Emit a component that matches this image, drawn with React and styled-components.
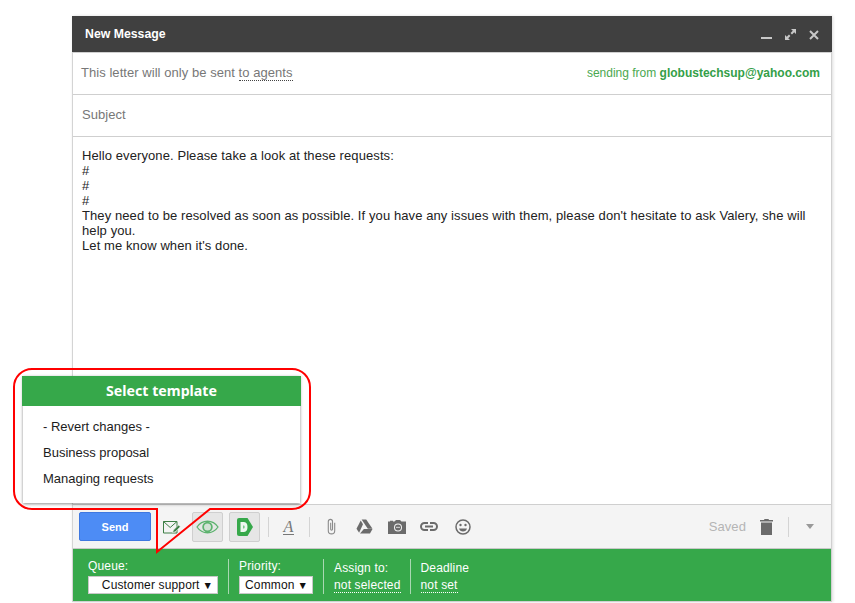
import React from 'react';
import styled, { createGlobalStyle } from 'styled-components';

const GlobalStyle = createGlobalStyle`
  html, body { margin: 0; padding: 0; background: #fff; }
  body { font-family: "Liberation Sans", Arial, sans-serif; }
  * { box-sizing: border-box; }
`;

const Page = styled.div`
  position: relative;
  width: 855px;
  height: 603px;
  padding: 16px 0 0 72px;
  overflow: hidden;
`;

const Compose = styled.div`
  width: 760px;
  height: 586px;
  display: flex;
  flex-direction: column;
  border-left: 1px solid #d4d4d4;
  border-right: 1px solid #d0d0d0;
  border-bottom: 1px solid #d0d0d0;
  box-shadow: 1px 0 3px rgba(0, 0, 0, 0.14);
`;

const Header = styled.div`
  height: 37px;
  margin: 0 -1px 0 -1px;
  flex: none;
  background: #404040;
  color: #fff;
  display: flex;
  align-items: center;
  justify-content: space-between;
  padding: 0 13px 1px 13px;
  font-size: 12.3px;
  font-weight: 700;
  border-bottom: 1px solid #d0d0d0;
`;

const HeaderIcons = styled.div`
  display: flex;
  align-items: center;
  gap: 13px;
  margin-top: 2px;
`;

const Row = styled.div`
  flex: none;
  height: ${p => p.$h}px;
  display: flex;
  align-items: center;
  justify-content: space-between;
  padding: 0 11px ${p => p.$pb || 0}px 8px;
  font-size: 13px;
  letter-spacing: 0.05px;
  color: #777;
  border-bottom: 1px solid #cfcfcf;
`;

const Dotted = styled.span`
  border-bottom: 1px dotted ${p => p.$c || '#444'};
  line-height: 14px;
  display: inline-block;
`;

const From = styled.div`
  color: #4aa84f;
  font-size: 12px;
  letter-spacing: 0;
  b { color: #34a048; font-weight: 700; }
`;

const Subject = styled.span`
  margin-left: 1px;
`;

const Body = styled.div`
  flex: 1;
  padding: 11px 9px;
  font-size: 13px;
  line-height: 15px;
  letter-spacing: 0.09px;
  color: #222;
`;

const Toolbar = styled.div`
  flex: none;
  height: 45px;
  background: #f4f4f4;
  border-top: 1px solid #cfcfcf;
  border-bottom: 1px solid #c8c8c8;
  display: flex;
  align-items: center;
  padding: 0 11px 0 6px;
`;

const SendButton = styled.div`
  width: 72px;
  height: 29px;
  background: #4d8cf5;
  border: 1px solid #3f78e0;
  border-radius: 2px;
  color: #fff;
  font-size: 11px;
  font-weight: 700;
  display: flex;
  align-items: center;
  justify-content: center;
  margin-right: 10px;
`;

const IconBox = styled.div`
  width: ${p => p.$w || 28}px;
  height: 30px;
  margin-left: ${p => p.$ml || 0}px;
  display: flex;
  align-items: center;
  justify-content: center;
  flex: none;
  ${p => p.$active && `
    background: #e6e6e6;
    border: 1px solid #cfcfcf;
    border-radius: 2px;
  `}
`;

const ToolSep = styled.div`
  width: 1px;
  height: 20px;
  background: #d4d4d4;
  flex: none;
  margin: 0 ${p => p.$m || 8}px;
`;

const FormatA = styled.span`
  font-family: "Liberation Serif", serif;
  font-style: italic;
  font-size: 16px;
  line-height: 15px;
  color: #777;
  border-bottom: 1px solid #777;
  padding: 0 1px;
`;

const Spacer = styled.div`
  flex: 1;
`;

const Saved = styled.span`
  font-size: 13px;
  letter-spacing: 0.1px;
  color: #b5b5b5;
  margin-right: 9px;
`;

const GreenBar = styled.div`
  flex: none;
  height: 52px;
  background: #36a84a;
  color: #fff;
  display: flex;
  align-items: flex-start;
  padding: 10px 0 0 15px;
  font-size: 12px;
  letter-spacing: 0.15px;
`;

const Field = styled.div`
  display: flex;
  flex-direction: column;
  gap: 3px;
  height: 35px;
  padding-top: ${p => p.$pt || 0}px;
  padding-right: ${p => p.$pr || 10}px;
  margin-right: 10px;
  border-right: ${p => (p.$last ? 'none' : '1px solid #a9d8b2')};
  line-height: 14px;
`;

const FakeSelect = styled.div`
  width: ${p => p.$w}px;
  height: 18px;
  background: #fff;
  border: 1px solid #c8c8c8;
  color: #111;
  display: flex;
  align-items: center;
  justify-content: flex-end;
  padding-right: 4px;
  gap: 3px;
  white-space: nowrap;
`;

const Arrow = styled.span`
  font-size: 10.5px;
  line-height: 1;
  letter-spacing: 0;
`;

const Overlay = styled.svg`
  position: absolute;
  left: 0;
  top: 0;
  pointer-events: none;
`;

const Popup = styled.div`
  position: absolute;
  left: 23px;
  top: 376px;
  width: 277px;
  height: 127px;
  background: #fff;
  box-shadow: 0 1px 3px rgba(0, 0, 0, 0.45);
`;

const PopupTitle = styled.div`
  height: 30px;
  margin: 0 -1px;
  background: #36a84a;
  color: #fff;
  font-family: "Noto Sans", sans-serif;
  font-weight: 700;
  font-size: 14.2px;
  padding-bottom: 2px;
  display: flex;
  align-items: center;
  justify-content: center;
`;

const PopupList = styled.div`
  padding: 8px 20px;
`;

const PopupItem = styled.div`
  height: 26px;
  line-height: 26px;
  font-size: 13px;
  color: #1c1c1c;
`;

const MinIcon = () => (
  <svg width="11" height="12" viewBox="0 0 11 12"><rect x="0" y="8" width="11" height="2" fill="#c8c8c8" /></svg>
);
const ExpandIcon = () => (
  <svg width="11" height="11" viewBox="0 0 11 11" fill="#c8c8c8">
    <path d="M6 0h5v5L9.200 3.200 7 5.400 5.600 4 7.800 1.800z" />
    <path d="M0 11V6l1.800 1.800L4 5.600 5.400 7 3.200 9.200 5 11z" />
  </svg>
);
const CloseIcon = () => (
  <svg width="10" height="10" viewBox="0 0 10 10"><path d="M1 1l8 8M9 1l-8 8" stroke="#c8c8c8" strokeWidth="2" /></svg>
);
const TickMail = () => (
  <svg width="18" height="14" viewBox="0 0 18 14" fill="none" stroke="#3e7f46" strokeWidth="1">
    <path d="M.5 1.500h13.500v11.500H.5z" />
    <path d="M.5 1.500l6.700 6 6.800-6" />
    <path d="M9.500 12.500l1-2.500 5-5 1.800 1.800-5 5z" fill="#3e7f46" stroke="#f4f4f4" strokeWidth=".6" />
  </svg>
);
const Eye = () => (
  <svg width="23" height="14" viewBox="0 0 26 16" fill="none" stroke="#5db36f" strokeWidth="1.500">
    <path d="M1 8c3-4.400 7-6.600 12-6.600S22 3.600 25 8c-3 4.400-7 6.600-12 6.600S4 12.400 1 8z" />
    <circle cx="13" cy="8" r="5" strokeWidth="2" fill="#d3e2d6" />
  </svg>
);
const DLogo = () => (
  <svg width="16" height="18" viewBox="0 0 16 18">
    <path d="M2 0h8.500L16 9l-5.500 9H2a2 2 0 0 1-2-2V2a2 2 0 0 1 2-2z" fill="#36a84a" />
    <path d="M3.500 4h3.500c2.500 0 3.500 2.200 3.500 5s-1 5-3.500 5H3.500z" fill="#eef8f0" />
    <path d="M6 7.500h.6c.8 0 1.100.6 1.100 1.500s-.3 1.500-1.100 1.500H6z" fill="#7cc88c" />
  </svg>
);
const Clip = () => (
  <svg width="11" height="17" viewBox="0 0 12 18" fill="none" stroke="#8a8a8a" strokeWidth="1.200">
    <path d="M9.500 5v8.500a3.500 3.500 0 0 1-7 0V3.500a2.300 2.300 0 0 1 4.600 0V12a1 1 0 0 1-2 0V5" />
  </svg>
);
const Drive = () => (
  <svg width="17" height="15" viewBox="0 0 17 15" fill="#6b6b6b">
    <path d="M5.600 0.500h4.600l6.300 9.300h-4.700z" />
    <path d="M4.700 1.500l2.300 3.800-3.900 8.400L.5 9.800z" />
    <path d="M7.900 10h8.600l-2.500 4.500H4z" />
  </svg>
);
const Camera = () => (
  <svg width="18" height="14" viewBox="0 0 18 14">
    <path d="M0 1.500h2V.8h3v.7h1.500L8 0h4l1.500 1.500H18V14H0z" fill="#6b6b6b" />
    <circle cx="10" cy="7.500" r="4" fill="#f4f4f4" />
    <circle cx="10" cy="7.500" r="3" fill="#6b6b6b" />
    <rect x="8" y="6.800" width="4" height="1.200" fill="#c4c4c4" />
  </svg>
);
const LinkIcon = () => (
  <svg width="18" height="9" viewBox="0 0 18 9" fill="none" stroke="#6b6b6b" strokeWidth="2">
    <path d="M8 1H4.500a3.500 3.500 0 0 0 0 7H8M10 1h3.500a3.500 3.500 0 0 1 0 7H10M5 4.500h8" />
  </svg>
);
const Smile = () => (
  <svg width="16" height="16" viewBox="0 0 16 16" fill="none" stroke="#6b6b6b" strokeWidth="1.500">
    <circle cx="8" cy="8" r="7" />
    <circle cx="5.500" cy="6" r="1.200" fill="#6b6b6b" stroke="none" />
    <circle cx="10.500" cy="6" r="1.200" fill="#6b6b6b" stroke="none" />
    <path d="M4 9.500h8c-.5 2-2 3-4 3s-3.500-1-4-3z" fill="#6b6b6b" stroke="none" />
  </svg>
);
const Trash = () => (
  <svg width="13" height="16" viewBox="0 0 13 16" fill="#6b6b6b">
    <path d="M4.500 0h4l.5 1h4v1.500H0V1h4z" />
    <path d="M1 3.500h11V16H1z" />
  </svg>
);
const Caret = () => (
  <svg width="8" height="5" viewBox="0 0 8 5"><path d="M0 0h8L4 5z" fill="#999" /></svg>
);

const templates = ['- Revert changes -', 'Business proposal', 'Managing requests'];

export default function App() {
  return (
    <Page>
      <GlobalStyle />
      <Compose>
        <Header>
          <span>New Message</span>
          <HeaderIcons>
            <MinIcon />
            <ExpandIcon />
            <CloseIcon />
          </HeaderIcons>
        </Header>
        <Row $h={42} $pb={1}>
          <span>This letter will only be sent <Dotted>to agents</Dotted></span>
          <From>sending from <b>globustechsup@yahoo.com</b></From>
        </Row>
        <Row $h={42} $pb={3}>
          <Subject>Subject</Subject>
        </Row>
        <Body>
          Hello everyone. Please take a look at these requests:<br />
          #<br />
          #<br />
          #<br />
          They need to be resolved as soon as possible. If you have any issues with them, please don't hesitate to ask Valery, she will help you.<br />
          Let me know when it's done.
        </Body>
        <Toolbar>
          <SendButton>Send</SendButton>
          <IconBox $w={21}><TickMail /></IconBox>
          <IconBox $w={31} $ml={10} $active><Eye /></IconBox>
          <IconBox $w={31} $ml={6} $active><DLogo /></IconBox>
          <ToolSep $m={8} />
          <IconBox $w={21} $ml={1}><FormatA>A</FormatA></IconBox>
          <ToolSep $m={10} />
          <IconBox $w={22}><Clip /></IconBox>
          <IconBox $w={44}><Drive /></IconBox>
          <IconBox $w={22}><Camera /></IconBox>
          <IconBox $w={42}><LinkIcon /></IconBox>
          <IconBox $w={26}><Smile /></IconBox>
          <Spacer />
          <Saved>Saved</Saved>
          <IconBox $w={22}><Trash /></IconBox>
          <ToolSep $m={11} />
          <IconBox $w={20}><Caret /></IconBox>
        </Toolbar>
        <GreenBar>
          <Field>
            <span>Queue:</span>
            <FakeSelect $w={130}>Customer support <Arrow>▼</Arrow></FakeSelect>
          </Field>
          <Field>
            <span>Priority:</span>
            <FakeSelect $w={74}>Common <Arrow>▼</Arrow></FakeSelect>
          </Field>
          <Field $pt={2} $pr={9}>
            <span>Assign to:</span>
            <span><Dotted $c="#fff">not selected</Dotted></span>
          </Field>
          <Field $last $pt={2}>
            <span>Deadline</span>
            <span><Dotted $c="#fff">not set</Dotted></span>
          </Field>
        </GreenBar>
      </Compose>
      <Popup>
        <PopupTitle>Select template</PopupTitle>
        <PopupList>
          {templates.map(t => <PopupItem key={t}>{t}</PopupItem>)}
        </PopupList>
      </Popup>
      <Overlay width="855" height="603" fill="none" stroke="#f00" strokeWidth="2">
        <path d="M32 369H292a18 18 0 0 1 18 18V491a18 18 0 0 1-18 18H210L157 552V509H32a18 18 0 0 1-18-18V387a18 18 0 0 1 18-18z" />
      </Overlay>
    </Page>
  );
}
